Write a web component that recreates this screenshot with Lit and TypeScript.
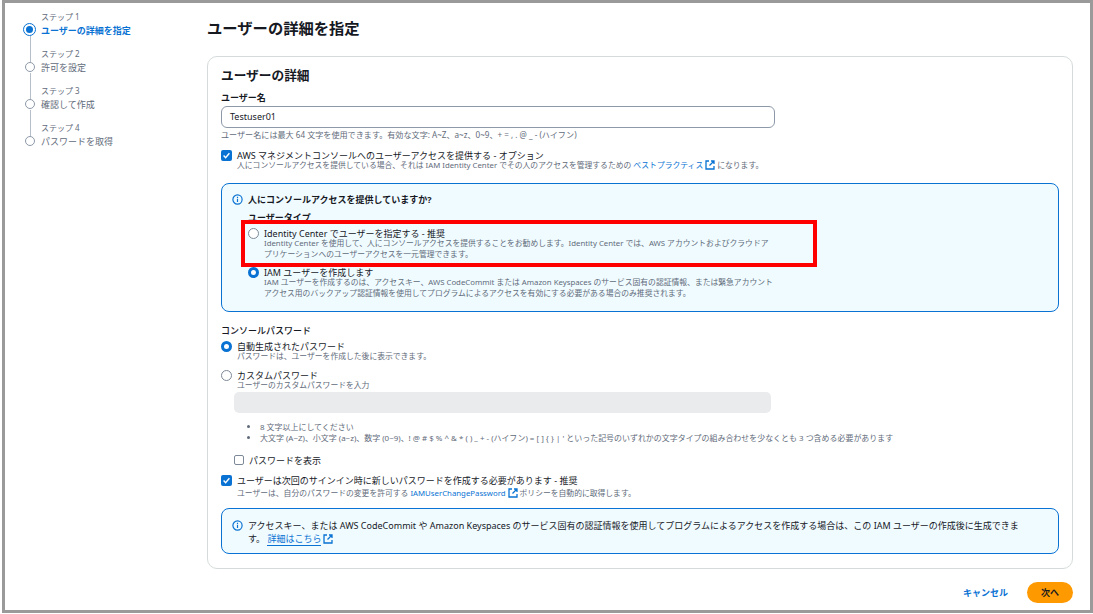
import { LitElement, html, css } from "lit";
import { customElement } from "lit/decorators.js";

const ext = html`<svg class="ext" viewBox="0 0 10 10" width="10" height="10"><path d="M4 1H1v8h8V6M6 1h3v3M9 1L4.5 5.5" fill="none" stroke="currentColor" stroke-width="1.3"/></svg>`;
const info = html`<svg class="info" viewBox="0 0 11 11" width="11" height="11"><circle cx="5.5" cy="5.5" r="4.6" fill="none" stroke="#0972d3" stroke-width="1.2"/><path d="M5.5 4.8v3.2M5.5 2.8v1.1" stroke="#0972d3" stroke-width="1.2"/></svg>`;
const check = html`<svg viewBox="0 0 11 11" width="11" height="11"><rect width="11" height="11" rx="2" fill="#0972d3"/><path d="M2.6 5.6l2 2.1 3.8-4.4" fill="none" stroke="#fff" stroke-width="1.4"/></svg>`;

@customElement("app-root")
export class AppRoot extends LitElement {
  static styles = css`
    :host { display: block; width: 1093px; height: 614px; background: #fff; overflow: hidden; padding-left: 2px;
      font-family: "Noto Sans", "Noto Sans CJK JP", sans-serif; color: #16191f; box-sizing: border-box; }
    * { box-sizing: border-box; }
    .frame { position: relative; width: 1091px; height: 613px; border: 3px solid #9a9a9a; background: #fff; display: flex; }
    .side { width: 202px; flex: none; padding: 7.5px 0 0 19px; }
    .step { position: relative; height: 37px; padding-left: 17px; }
    .step small { display: block; font-size: 8px; line-height: 11px; color: #5f6b7a; height: 13px; }
    .step b { display: block; font-weight: 400; font-size: 9px; line-height: 13px; color: #5f6b7a; white-space: nowrap; }
    .step.on b { color: #0972d3; font-weight: 700; }
    .dot { position: absolute; left: 1px; top: 14.5px; width: 10px; height: 10px; border-radius: 50%; border: 1.3px solid #8d99a8; background: #fff; }
    .step.on .dot { left: -1px; top: 12.5px; width: 13px; height: 13px; border-color: #0972d3; }
    .step.on .dot::after { content: ""; position: absolute; inset: 2px; border-radius: 50%; background: #0972d3; }
    .step:not(:last-child)::after { content: ""; position: absolute; left: 5.5px; top: 25.5px; height: 26px; width: 1px; background: #b6bec9; }
    .main { flex: 1; min-width: 0; padding-right: 17px; display: flex; flex-direction: column; }
    h1 { margin: 0; font-size: 15.3px; line-height: 22px; padding: 14px 0 17px; font-weight: 700; }
    .card { height: 513px; border: 1px solid #d5dbdb; border-radius: 10px; padding: 8px 13px 0 13px; }
    h2 { margin: 0 0 6px; font-size: 12.7px; line-height: 20px; font-weight: 700; }
    .lab { font-size: 9px; line-height: 13px; font-weight: 700; }
    .input { margin-top: 2px; width: 554px; height: 22px; border: 1px solid #8d99a8; border-radius: 6px; font-size: 9px; line-height: 20px; padding-left: 8px; color: #16191f; }
    .hint { margin-top: 1px; font-size: 8.1px; line-height: 11px; color: #5f6b7a; white-space: nowrap; }
    .row { display: flex; gap: 5px; align-items: flex-start; }
    .row > svg, .radio { flex: none; margin-top: 0; }
    .t { font-size: 9px; line-height: 12px; margin-bottom: -2px; white-space: nowrap; }
    .d { font-size: 7.8px; line-height: 11px; color: #5f6b7a; white-space: nowrap; }
    .d.gap { margin-top: 3px; }
    .top { margin-top: 10px; }
    a { color: #0972d3; text-decoration: none; }
    .ext { vertical-align: -2px; margin: 0 2px; color: #0972d3; }
    .alert { border: 1px solid #0972d3; border-radius: 8px; background: #f0fbff; }
    .a1 { margin-top: 12px; height: 129px; width: 838px; padding: 9px 10px; }
    .a1-h { display: flex; gap: 5px; align-items: center; font-size: 9px; line-height: 13px; font-weight: 700; }
    .ut { font-size: 9px; line-height: 13px; font-weight: 700; margin: 5px 0 5px 16px; height: 12px; }
    .radio { width: 11px; height: 11px; border-radius: 50%; border: 1.2px solid #7d8998; background: #fff; }
    .radio.on { border: 3.2px solid #0972d3; }
    .opt { margin-left: 16px; gap: 5px; }
    .opt + .opt { margin-top: 7px; }
    .pw { margin-top: 12px; }
    .pw .lab { font-weight: 500; margin-bottom: 4px; }
    .custom { margin-top: 8px; }
    .pwin { margin: 1px 0 0 13px; width: 537px; height: 21px; background: #e9ebed; border-radius: 5px; }
    ul { margin: 8px 0 0 13px; padding: 0 0 0 26px; font-size: 7.96px; line-height: 11px; color: #5f6b7a; white-space: nowrap; }
    .show { margin: 12px 0 0 13px; gap: 5px; }
    .show .box { flex: none; width: 10px; height: 10px; margin-top: 0; border: 1.2px solid #7d8998; border-radius: 2px; }
    .a2 { margin-top: 9px; width: 838px; height: 46px; padding: 10px 10px; display: flex; gap: 5px; font-size: 9px; line-height: 13px; }
    .a2 .info { flex: none; margin-top: 1px; }
    .a2 a { border-bottom: 1px solid #0972d3; }
    .foot { display: flex; justify-content: flex-end; align-items: center; height: 21px; margin-top: 13px; gap: 19px; font-size: 9px; font-weight: 700; }
    .btn { width: 46px; height: 21px; border-radius: 11px; background: #ff9900; display: flex; align-items: center; justify-content: center; color: #16191f; }
    .red { position: absolute; left: 236px; top: 217px; width: 576px; height: 47px; border: 4px solid #ff0000; pointer-events: none; }
  `;

  render() {
    const steps = ["ユーザーの詳細を指定", "許可を設定", "確認して作成", "パスワードを取得"];
    return html`<div class="frame">
      <nav class="side">
        ${steps.map((s, i) => html`<div class="step ${i === 0 ? "on" : ""}"><small>ステップ ${i + 1}</small><b>${s}</b><span class="dot"></span></div>`)}
      </nav>
      <main class="main">
        <h1>ユーザーの詳細を指定</h1>
        <section class="card">
          <h2>ユーザーの詳細</h2>
          <div class="lab">ユーザー名</div>
          <div class="input">Testuser01</div>
          <div class="hint">ユーザー名には最大 64 文字を使用できます。有効な文字: A~Z、a~z、0~9、+ = , . @ _ - (ハイフン)</div>
          <div class="row top">${check}<div>
            <div class="t">AWS マネジメントコンソールへのユーザーアクセスを提供する - オプション</div>
            <div class="d">人にコンソールアクセスを提供している場合、それは IAM Identity Center でその人のアクセスを管理するための <a href="#">ベストプラクティス${ext}</a>になります。</div>
          </div></div>
          <div class="alert a1">
            <div class="a1-h">${info}<span>人にコンソールアクセスを提供していますか?</span></div>
            <div class="ut">ユーザータイプ</div>
            <div class="row opt"><span class="radio"></span><div>
              <div class="t">Identity Center でユーザーを指定する - 推奨</div>
              <div class="d">Identity Center を使用して、人にコンソールアクセスを提供することをお勧めします。Identity Center では、AWS アカウントおよびクラウドア<br>プリケーションへのユーザーアクセスを一元管理できます。</div>
            </div></div>
            <div class="row opt"><span class="radio on"></span><div>
              <div class="t">IAM ユーザーを作成します</div>
              <div class="d">IAM ユーザーを作成するのは、アクセスキー、AWS CodeCommit または Amazon Keyspaces のサービス固有の認証情報、または緊急アカウント<br>アクセス用のバックアップ認証情報を使用してプログラムによるアクセスを有効にする必要がある場合のみ推奨されます。</div>
            </div></div>
          </div>
          <div class="pw">
            <div class="lab">コンソールパスワード</div>
            <div class="row"><span class="radio on"></span><div>
              <div class="t">自動生成されたパスワード</div>
              <div class="d">パスワードは、ユーザーを作成した後に表示できます。</div>
            </div></div>
            <div class="row custom"><span class="radio"></span><div>
              <div class="t">カスタムパスワード</div>
              <div class="d">ユーザーのカスタムパスワードを入力</div>
            </div></div>
            <div class="pwin"></div>
            <ul>
              <li>8 文字以上にしてください</li>
              <li>大文字 (A~Z)、小文字 (a~z)、数字 (0~9)、! @ # $ % ^ &amp; * ( ) _ + - (ハイフン) = [ ] { } | ' といった記号のいずれかの文字タイプの組み合わせを少なくとも 3 つ含める必要があります</li>
            </ul>
            <div class="row show"><span class="box"></span><span class="t">パスワードを表示</span></div>
            <div class="row top">${check}<div>
              <div class="t">ユーザーは次回のサインイン時に新しいパスワードを作成する必要があります - 推奨</div>
              <div class="d gap">ユーザーは、自分のパスワードの変更を許可する <a href="#">IAMUserChangePassword${ext}</a>ポリシーを自動的に取得します。</div>
            </div></div>
          </div>
          <div class="alert a2">${info}<div>アクセスキー、または AWS CodeCommit や Amazon Keyspaces のサービス固有の認証情報を使用してプログラムによるアクセスを作成する場合は、この IAM ユーザーの作成後に生成できま<br>す。 <a href="#">詳細はこちら</a>${ext}</div></div>
        </section>
        <footer class="foot"><a href="#">キャンセル</a><span class="btn">次へ</span></footer>
      </main>
      <div class="red"></div>
    </div>`;
  }
}
